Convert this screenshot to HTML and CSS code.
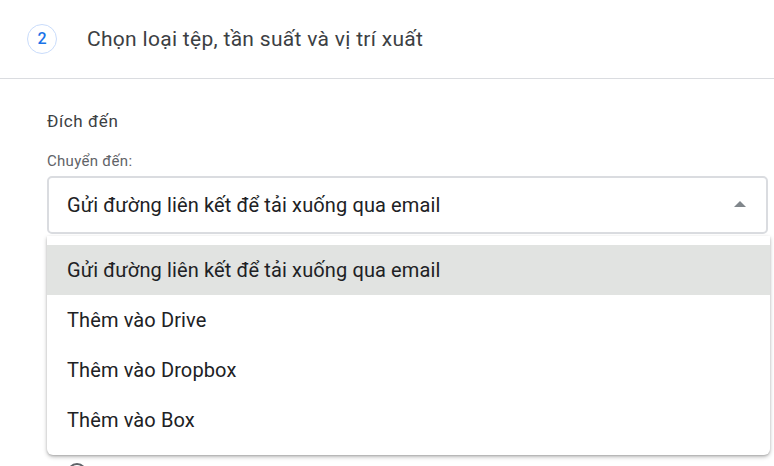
FILE: index.html
```html
<!DOCTYPE html>
<html lang="vi">
<head>
<meta charset="utf-8">
<link rel="stylesheet" href="styles.css">
</head>
<body>
<div class="page">
  <header class="step-header">
    <span class="step-num">2</span>
    <h2 class="step-title">Chọn loại tệp, tần suất và vị trí xuất</h2>
  </header>
  <section class="content">
    <div class="section-label">Đích đến</div>
    <div class="field-label">Chuyển đến:</div>
    <div class="select-wrap">
      <div class="select">
        <span class="select-value">Gửi đường liên kết để tải xuống qua email</span>
        <span class="arrow"></span>
      </div>
      <ul class="menu">
        <li class="menu-item active">Gửi đường liên kết để tải xuống qua email</li>
        <li class="menu-item">Thêm vào Drive</li>
        <li class="menu-item">Thêm vào Dropbox</li>
        <li class="menu-item">Thêm vào Box</li>
      </ul>
    </div>
    <div class="radio-row"><span class="radio"></span></div>
  </section>
</div>
</body>
</html>
```
FILE: styles.css
```css
* { box-sizing: border-box; }
html, body { margin: 0; padding: 0; background: #fff; }
body {
  font-family: Roboto, "Noto Sans", "Liberation Sans", sans-serif;
  color: #3c4043;
  width: 774px;
  height: 466px;
  overflow: hidden;
}
.step-header {
  height: 79px;
  border-bottom: 1px solid #dadce0;
  display: flex;
  align-items: center;
  padding-left: 27px;
  padding-bottom: 1px;
}
.step-num {
  width: 30px;
  height: 30px;
  border: 1px solid #c9dcfb;
  border-radius: 50%;
  color: #1a73e8;
  font-size: 16px;
  font-weight: 500;
  display: flex;
  align-items: center;
  justify-content: center;
}
.step-title {
  margin: 0 0 0 30px;
  font-size: 21px;
  letter-spacing: 0.3px;
  font-weight: 400;
  color: #3c4043;
}
.content {
  padding: 31px 6px 0 47px;
}
.section-label {
  font-size: 17px;
  letter-spacing: 0.6px;
  color: #3c4043;
  line-height: 22px;
}
.field-label {
  margin-top: 19px;
  font-size: 15px;
  letter-spacing: 0.3px;
  color: #5f6368;
  line-height: 20px;
}
.select-wrap {
  position: relative;
  margin-top: 5px;
}
.select {
  height: 58px;
  border: 2px solid #dadce0;
  border-radius: 5px;
  display: flex;
  align-items: center;
  justify-content: space-between;
  padding: 0 20px 0 18px;
}
.select-value {
  font-size: 20px;
  letter-spacing: 0.12px;
  color: #202124;
}
.arrow {
  width: 0;
  height: 0;
  border-left: 6px solid transparent;
  border-right: 6px solid transparent;
  border-bottom: 6px solid #80868b;
  margin-top: -2px;
}
.menu {
  position: absolute;
  left: 0;
  top: 60px;
  width: 723px;
  margin: 0;
  padding: 9px 0 10px;
  list-style: none;
  background: #fff;
  border-radius: 0 0 6px 6px;
  box-shadow: 0 2px 4px rgba(0,0,0,0.25), 0 1px 2px rgba(0,0,0,0.15);
  z-index: 2;
}
.menu-item {
  height: 50px;
  display: flex;
  align-items: center;
  padding-left: 20px;
  font-size: 20px;
  letter-spacing: 0.12px;
  color: #202124;
}
.menu-item.active { background: #e1e3e1; }
.radio-row {
  padding: 229px 0 0 20px;
}
.radio {
  display: block;
  width: 20px;
  height: 20px;
  border: 2px solid #5f6368;
  border-radius: 50%;
}
```
